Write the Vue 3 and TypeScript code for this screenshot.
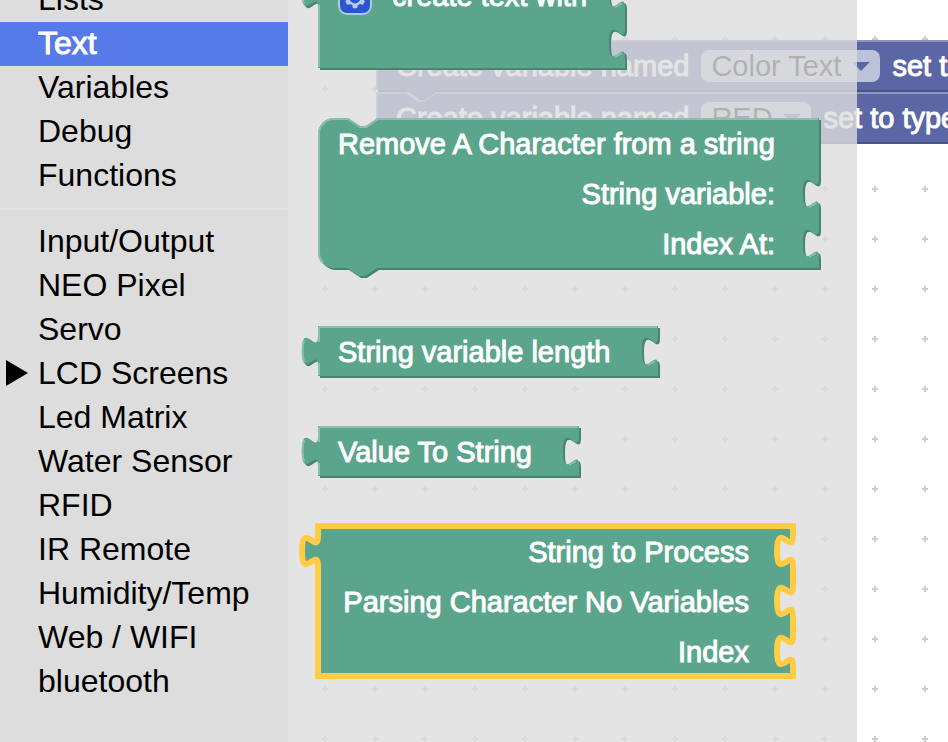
<script setup lang="ts">
import { computed, ref } from 'vue'

interface Category {
  name: string
  expandable?: boolean
}

interface BlockSpec {
  id: string
  kind: 'output' | 'statement'
  width: number
  rows: string[]
  sockets: number[]
  mutator?: boolean
}

interface VariableBlock {
  id: string
  value: string
}

const ROW = 50

const groups: Category[][] = [
  [{ name: 'Lists' }, { name: 'Text' }, { name: 'Variables' }, { name: 'Debug' }, { name: 'Functions' }],
  [
    { name: 'Input/Output' },
    { name: 'NEO Pixel' },
    { name: 'Servo' },
    { name: 'LCD Screens', expandable: true },
    { name: 'Led Matrix' },
    { name: 'Water Sensor' },
    { name: 'RFID' },
    { name: 'IR Remote' },
    { name: 'Humidity/Temp' },
    { name: 'Web / WIFI' },
    { name: 'bluetooth' },
  ],
]

const activeCategory = ref('Text')
const selectedBlock = ref('parse')

const specs: BlockSpec[] = [
  { id: 'join', kind: 'output', width: 307, rows: ['create text with', ''], sockets: [0, 1], mutator: true },
  {
    id: 'remove',
    kind: 'statement',
    width: 501,
    rows: ['Remove A Character from a string', 'String variable:', 'Index At:'],
    sockets: [1, 2],
  },
  { id: 'length', kind: 'output', width: 340, rows: ['String variable length'], sockets: [0] },
  { id: 'value', kind: 'output', width: 261, rows: ['Value To String'], sockets: [0] },
  {
    id: 'parse',
    kind: 'output',
    width: 475,
    rows: ['String to Process', 'Parsing Character No Variables', 'Index'],
    sockets: [0, 1, 2],
  },
]

const variableBlocks: VariableBlock[] = [
  { id: 'color', value: 'Color Text' },
  { id: 'red', value: 'RED' },
]

// Right edge of a block, running downwards through its sockets.
function rightEdge(spec: BlockSpec): string {
  return spec.rows
    .map((_, i) =>
      spec.sockets.includes(i)
        ? `v10 c0,20 -16,-16 -16,15 s16,-5 16,15 V${(i + 1) * ROW}`
        : `V${(i + 1) * ROW}`,
    )
    .join(' ')
}

function outline(spec: BlockSpec): string {
  if (spec.kind === 'statement') {
    return `M0,16 A16,16 0 0,1 16,0 H30 l12,8 6,0 12,-8 H${spec.width} ${rightEdge(spec)} H59 l-12,8 -6,0 -12,-8 H16 a16,16 0 0,1 -16,-16 z`
  }
  return `M0,0 H${spec.width} ${rightEdge(spec)} H0 V40 c0,-20 -16,16 -16,-15 s16,5 16,-15 z`
}

// Bevel highlight along the top and left edges and under each socket.
function highlight(spec: BlockSpec): string {
  const bottom = spec.rows.length * ROW
  const sockets = spec.sockets.map((i) => `M${spec.width - 10},${i * ROW + 39} l7,-4`).join(' ')
  if (spec.kind === 'statement') {
    return `M1,15 A15,15 0 0,1 16,1 H30 l12,8 6,0 12,-8 H${spec.width - 1} ${sockets} M5,${bottom - 5} A15,15 0 0,1 1,${bottom - 16} V15`
  }
  return `M1,1 H${spec.width - 1} ${sockets} M1,${bottom - 1} V37 m-15,-1 q-3,-11 0,-22 m15,2 V1`
}

const blocks = computed(() =>
  specs.map((s) => ({
    ...s,
    selected: s.id === selectedBlock.value,
    outline: outline(s),
    highlight: highlight(s),
  })),
)

// The first row keeps to the left unless it labels the topmost of several inputs.
function isLeading(spec: BlockSpec, row: number): boolean {
  return row === 0 && (spec.rows.length === 1 || spec.kind === 'statement' || !!spec.mutator)
}

const variableOutline = 'M0,0 H30 l12,8 6,0 12,-8 H1200 V50 H60 l-12,8 -6,0 -12,-8 H0 z'
const variableHighlight = 'M1,50 V1 H30 l12,8 6,0 12,-8 H1200'
</script>

<template>
  <div class="editor">
    <nav class="toolbox" aria-label="Block categories">
      <ul v-for="(group, g) in groups" :key="g" class="group">
        <li v-for="cat in group" :key="cat.name">
          <button
            type="button"
            class="category"
            :class="{ active: cat.name === activeCategory }"
            @click="activeCategory = cat.name"
          >
            <span class="marker">
              <svg v-if="cat.expandable" width="22" height="26" viewBox="0 0 22 26" aria-hidden="true">
                <path d="M0,0 L22,13 L0,26 z" />
              </svg>
            </span>
            {{ cat.name }}
          </button>
        </li>
      </ul>
    </nav>

    <main class="workspace">
      <svg class="grid" width="100%" height="100%" aria-hidden="true">
        <defs>
          <pattern id="grid-dots" x="12" y="14" width="50" height="50" patternUnits="userSpaceOnUse">
            <path d="M22,25 H28 M25,22 V28" stroke="#ccc" stroke-width="2" />
          </pattern>
        </defs>
        <rect width="100%" height="100%" fill="url(#grid-dots)" />
      </svg>

      <div class="canvas">
        <div v-for="v in variableBlocks" :key="v.id" class="variable-block">
          <svg class="shape" aria-hidden="true">
            <path class="shade" :d="variableOutline" transform="translate(2,2)" />
            <path class="face" :d="variableOutline" />
            <path class="light" :d="variableHighlight" />
          </svg>
          <label class="field" :for="`var-${v.id}`">Create variable named</label>
          <span class="dropdown">
            <select :id="`var-${v.id}`">
              <option>{{ v.value }}</option>
            </select>
            <svg class="arrow" width="18" height="9" viewBox="0 0 18 9" aria-hidden="true">
              <path d="M0,0 H18 L9,9 z" />
            </svg>
          </span>
          <span class="field">set to type</span>
        </div>
      </div>

      <section class="flyout" aria-label="Text blocks">
        <div
          v-for="b in blocks"
          :key="b.id"
          class="block"
          :class="[b.kind, { selected: b.selected }]"
          :style="{ width: b.width + 'px' }"
          @click="selectedBlock = b.id"
        >
          <svg class="shape" aria-hidden="true">
            <path class="shade" :d="b.outline" transform="translate(2,2)" />
            <path class="face" :d="b.outline" />
            <path class="light" :d="b.highlight" />
          </svg>
          <div
            v-for="(row, i) in b.rows"
            :key="i"
            class="row"
            :class="{ leading: isLeading(b, i), 'with-mutator': b.mutator && i === 0 }"
          >
            <svg v-if="b.mutator && i === 0" class="mutator" width="34" height="34" viewBox="-1 -1 34 34" aria-hidden="true">
              <rect width="32" height="32" rx="8" fill="#2a56d6" stroke="#a8cfd6" stroke-width="2" />
              <g transform="scale(2)">
                <path
                  fill="#b4cdea"
                  d="m4.203,7.296 0,1.368 -0.92,0.677 -0.11,0.41 0.9,1.559 0.41,0.11 1.043,-0.457 1.187,0.683 0.127,1.134 0.3,0.3 1.8,0 0.3,-0.299 0.127,-1.138 1.185,-0.682 1.046,0.458 0.409,-0.11 0.9,-1.559 -0.11,-0.41 -0.92,-0.677 0,-1.366 0.92,-0.677 0.11,-0.41 -0.9,-1.559 -0.409,-0.109 -1.046,0.458 -1.185,-0.682 -0.127,-1.138 -0.3,-0.299 -1.8,0 -0.3,0.3 -0.126,1.135 -1.187,0.682 -1.043,-0.457 -0.41,0.11 -0.899,1.559 0.108,0.409z"
                />
                <circle cx="8" cy="8" r="2.7" fill="#2a56d6" />
              </g>
            </svg>
            <span class="field">{{ row }}</span>
          </div>
        </div>
      </section>
    </main>
  </div>
</template>

<style>
body {
  margin: 0;
  background: #fff;
}
</style>

<style scoped>
.editor {
  display: flex;
  height: 100vh;
  overflow: hidden;
  font-family: "Liberation Sans", Arial, sans-serif;
}

.toolbox {
  flex: 0 0 288px;
  background: #ddd;
}

.group {
  margin: 0;
  padding: 0;
  list-style: none;
}

.group:first-child {
  margin-top: -22px;
  padding-bottom: 10px;
  border-bottom: 2px solid #e5e5e5;
  margin-bottom: 10px;
}

.category {
  display: flex;
  align-items: center;
  width: 100%;
  height: 44px;
  margin: 0;
  padding: 0 0 2px;
  border: 0;
  background: none;
  color: #000;
  font: inherit;
  font-size: 32px;
  line-height: 42px;
  text-align: left;
  white-space: nowrap;
  cursor: pointer;
}

.category.active {
  background: #567aea;
  color: #fff;
  -webkit-text-stroke: 1px #fff;
}

.marker {
  display: flex;
  flex: 0 0 32px;
  padding-left: 6px;
}

.workspace {
  position: relative;
  flex: 1;
  overflow: hidden;
}

.grid {
  position: absolute;
  inset: 0;
}

.shape {
  position: absolute;
  top: 0;
  left: 0;
  width: 100%;
  height: 100%;
  overflow: visible;
}

.light {
  fill: none;
  stroke-width: 2px;
}

.canvas {
  position: absolute;
  top: 40px;
  left: 88px;
  display: flex;
  flex-direction: column;
  gap: 2px;
}

.variable-block {
  position: relative;
  display: flex;
  align-items: center;
  gap: 12px;
  height: 50px;
  padding: 2px 20px 0;
  box-sizing: border-box;
  white-space: nowrap;
}

.variable-block .shade {
  fill: #495284;
}

.variable-block .face {
  fill: #5b67a5;
}

.variable-block .light {
  stroke: #8c95c0;
}

.field {
  position: relative;
  color: #fff;
  font-size: 29px;
  line-height: 50px;
  white-space: nowrap;
  -webkit-text-stroke: 1px #fff;
}

.dropdown {
  position: relative;
  display: flex;
  align-items: center;
}

.dropdown select {
  height: 32px;
  padding: 0 38px 0 10px;
  border: 0;
  border-radius: 8px;
  background: rgba(255, 255, 255, 0.6);
  color: #000;
  font: inherit;
  font-size: 29px;
  line-height: 32px;
  appearance: none;
}

.arrow {
  position: absolute;
  right: 10px;
  fill: #5b67a5;
  pointer-events: none;
}

.flyout {
  position: absolute;
  top: 0;
  bottom: 0;
  left: 0;
  display: flex;
  flex-direction: column;
  gap: 50px;
  box-sizing: border-box;
  width: 569px;
  padding-left: 30px;
  background: rgba(221, 221, 221, 0.8);
}

.block {
  position: relative;
  cursor: grab;
}

.block:first-child {
  margin-top: -32px;
}

.block.statement {
  margin-bottom: 8px;
}

.block .shade {
  fill: #498470;
}

.block .face {
  fill: #5ba58c;
}

.block .light {
  stroke: #8cc0ae;
}

.block.selected .shade,
.block.selected .light {
  display: none;
}

.block.selected .face {
  stroke: #fc4;
  stroke-width: 6px;
}

.row {
  position: relative;
  display: flex;
  align-items: center;
  justify-content: flex-end;
  gap: 20px;
  height: 50px;
  padding: 2px 44px 0 20px;
  box-sizing: border-box;
}

.row.leading {
  justify-content: flex-start;
}

.row.with-mutator {
  padding-top: 6px;
}

.mutator {
  flex: none;
  margin-top: 4px;
}
</style>
